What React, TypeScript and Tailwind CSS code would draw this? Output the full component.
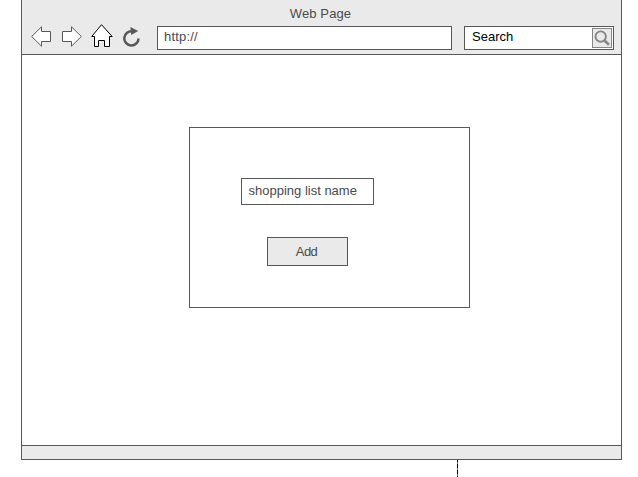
function ArrowLeft() {
  return (
    <svg width="20" height="21" viewBox="0 0 20 21" fill="#fff" stroke="#58585a">
      <path d="M0.7 10.5 10.5 0.8V5.5H19.5V15.5H10.5V20.2Z" />
    </svg>
  );
}

function ArrowRight() {
  return (
    <svg width="20" height="21" viewBox="0 0 20 21" fill="#fff" stroke="#58585a">
      <path d="M19.3 10.5 9.5 0.8V5.5H0.5V15.5H9.5V20.2Z" />
    </svg>
  );
}

function Home() {
  return (
    <svg width="22" height="23" viewBox="0 0 22 23" fill="#fff" stroke="#000">
      <path d="M10.5 0.7 0.7 12.5H3.5V22.5H7.5V16.5H13.5V22.5H18.5V12.5H21.2Z" />
    </svg>
  );
}

function Refresh() {
  return (
    <svg width="18" height="21" viewBox="0 0 18 21" fill="none">
      <path d="M9.5 4.3A7.1 7.1 0 1 0 15.5 11.4" stroke="#58585a" strokeWidth="2.5" />
      <path d="M7.4 0 15.2 4 8.2 8Z" fill="#58585a" />
    </svg>
  );
}

function Magnifier() {
  return (
    <svg width="18" height="18" viewBox="0 0 18 18" fill="none" stroke="#858587">
      <circle cx="7.7" cy="7.6" r="5.2" strokeWidth="1.9" />
      <path d="M11.2 11.2 16 15.8" strokeWidth="2.6" />
    </svg>
  );
}

export default function App() {
  return (
    <div className="h-[477px] w-[638px] overflow-hidden bg-white pl-[21px] font-['Liberation_Sans',Arial,sans-serif] text-[13px] leading-4 text-[#4a4a4c]">
      <main className="flex h-[460px] w-[601px] flex-col border border-t-0 border-[#58585a]">
        <header className="h-[55px] border-b border-[#58585a] bg-[#eaeaea]">
          <h1 className="h-[24px] pt-[6px] pr-[2px] text-center tracking-[0.1px]">Web Page</h1>
          <div className="flex items-start pl-[9px]">
            <div className="flex pt-[2px]"><ArrowLeft /></div>
            <div className="ml-[11px] flex pt-[2px]"><ArrowRight /></div>
            <div className="ml-[9px] flex"><Home /></div>
            <div className="ml-[10px] flex pt-[3px]"><Refresh /></div>
            <div className="mt-[2px] ml-[16px] h-[24px] w-[295px] border border-[#58585a] bg-white pt-[2px] pl-[6px] tracking-[0.2px]">
              http://
            </div>
            <div className="mt-[2px] ml-[12px] flex h-[24px] w-[150px] justify-between border border-[#58585a] bg-white pt-px pr-px pl-[7px] text-black">
              <span className="pt-px">Search</span>
              <button className="h-[20px] w-[20px] border border-[#858587] bg-[#eaeaea]" aria-label="Search">
                <Magnifier />
              </button>
            </div>
          </div>
        </header>
        <section className="flex-1 pt-[72px] pl-[167px]">
          <div className="h-[181px] w-[281px] border border-[#58585a] pt-[50px] pl-[51px]">
            <div className="h-[27px] w-[133px] border border-[#58585a] pt-[4px] pl-[6.5px]">
              shopping list name
            </div>
            <button className="mt-[32px] ml-[26px] block h-[29px] w-[81px] border border-[#58585a] bg-[#eaeaea] pt-px pr-[2px] tracking-[-0.6px]">
              Add
            </button>
          </div>
        </section>
        <footer className="h-[14px] shrink-0 border-t border-[#58585a] bg-[#eaeaea]" />
      </main>
      <svg className="ml-[436px] block" width="1" height="17">
        <rect width="1" height="17" fill="#777" />
        <path d="M0.5 0V17" stroke="#000" strokeDasharray="4 2" strokeDashoffset="2" />
      </svg>
    </div>
  );
}
